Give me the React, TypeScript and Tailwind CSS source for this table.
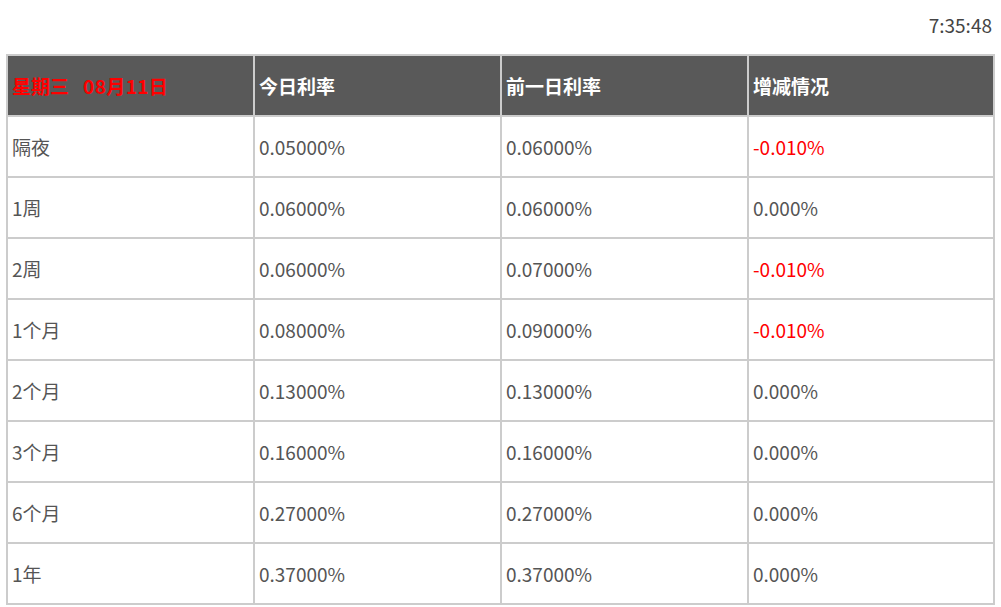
import React from "react";

const rows = [
  { term: "隔夜", today: "0.05000%", prev: "0.06000%", diff: "-0.010%" },
  { term: "1周", today: "0.06000%", prev: "0.06000%", diff: "0.000%" },
  { term: "2周", today: "0.06000%", prev: "0.07000%", diff: "-0.010%" },
  { term: "1个月", today: "0.08000%", prev: "0.09000%", diff: "-0.010%" },
  { term: "2个月", today: "0.13000%", prev: "0.13000%", diff: "0.000%" },
  { term: "3个月", today: "0.16000%", prev: "0.16000%", diff: "0.000%" },
  { term: "6个月", today: "0.27000%", prev: "0.27000%", diff: "0.000%" },
  { term: "1年", today: "0.37000%", prev: "0.37000%", diff: "0.000%" },
];

const cell =
  "h-[61px] flex items-center px-[4px] pt-[2px] border-r-2 border-b-2 border-[#cccccc]";

export default function App() {
  return (
    <div
      className="w-[1001px] h-[607px] bg-white text-[#555555] overflow-hidden"
      style={{ fontFamily: '"Noto Sans CJK SC", "Noto Sans", sans-serif' }}
    >
      <div className="h-[54px] flex items-center justify-end pr-[9px] pb-[4px] text-[19px] text-[#444]">
        7:35:48
      </div>

      {/* rates table */}
      <div className="ml-[6px] w-[989px] grid grid-cols-[247px_247px_247px_246px] border-l-2 border-t-2 border-[#cccccc] text-[19px]">
        <div className={`${cell} bg-[#595959] text-[#ff0000] font-bold`}>
          <span>星期三</span>
          <span className="ml-[14px] tracking-[0.4px]">08月11日</span>
        </div>
        <div className={`${cell} bg-[#595959] text-white font-bold`}>今日利率</div>
        <div className={`${cell} bg-[#595959] text-white font-bold`}>前一日利率</div>
        <div className={`${cell} bg-[#595959] text-white font-bold`}>增减情况</div>

        {rows.map((r) => (
          <React.Fragment key={r.term}>
            <div className={cell}>{r.term}</div>
            <div className={cell}>{r.today}</div>
            <div className={cell}>{r.prev}</div>
            <div className={`${cell} ${r.diff.startsWith("-") ? "text-[#ff0000]" : ""}`}>
              {r.diff}
            </div>
          </React.Fragment>
        ))}
      </div>
    </div>
  );
}
